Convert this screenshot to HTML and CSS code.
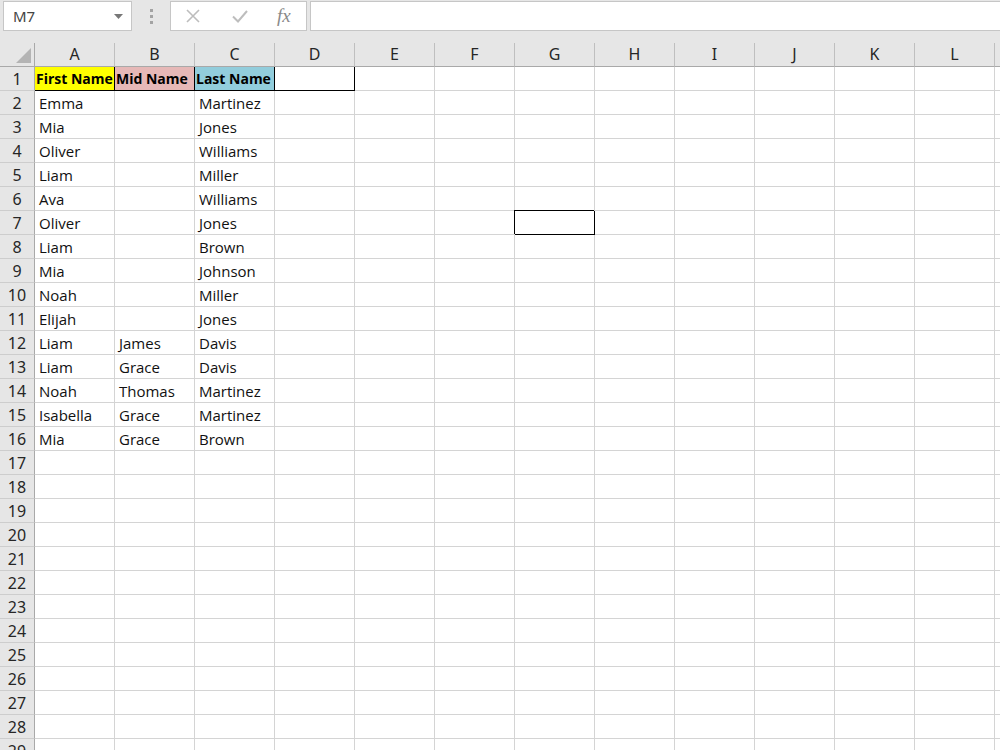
FILE: index.html
```html
<!DOCTYPE html>
<html lang="en">
<head>
  <meta charset="UTF-8" />
  <title>Names - Excel</title>
  <link rel="stylesheet" href="styles.css">
</head>
<body>
  <div class="toolbar">
    <div class="namebox">
      <span>M7</span>
      <svg class="caret" width="9" height="5" viewBox="0 0 9 5"><path d="M0 0h9L4.5 5z" fill="#777"/></svg>
    </div>
    <div class="grip"><i></i><i></i><i></i></div>
    <div class="fxbox">
      <svg width="16" height="16" viewBox="0 0 16 16"><path d="M2 2l12 12M14 2L2 14" stroke="#bdbdbd" stroke-width="1.6" fill="none"/></svg>
      <svg width="18" height="16" viewBox="0 0 18 16"><path d="M2 8.5l5 5L16 3" stroke="#bdbdbd" stroke-width="2" fill="none"/></svg>
      <span class="fx">fx</span>
    </div>
    <div class="formula"></div>
  </div>

  <div class="sheet" id="sheet"></div>

  <script>
    const cols = ["A", "B", "C", "D", "E", "F", "G", "H", "I", "J", "K", "L", "M"];
    const first = ["Emma", "Mia", "Oliver", "Liam", "Ava", "Oliver", "Liam", "Mia", "Noah", "Elijah", "Liam", "Liam", "Noah", "Isabella", "Mia"];
    const mid = ["", "", "", "", "", "", "", "", "", "", "James", "Grace", "Thomas", "Grace", "Grace"];
    const last = ["Martinez", "Jones", "Williams", "Miller", "Williams", "Jones", "Brown", "Johnson", "Miller", "Jones", "Davis", "Davis", "Martinez", "Martinez", "Brown"];
    const sheet = document.getElementById("sheet");

    function cell(cls, text) {
      const d = document.createElement("div");
      d.className = cls;
      d.textContent = text || "";
      sheet.appendChild(d);
      return d;
    }

    cell("corner");
    cols.forEach(c => cell("colhead", c));

    for (let r = 1; r <= 29; r++) {
      cell("rowhead", r);
      cols.forEach((c, i) => {
        let text = "";
        let cls = "cell";
        if (r === 1) {
          text = ["First Name", "Mid Name", "Last Name"][i] || "";
          if (i < 4) cls += " title";
          if (i === 0) cls += " yellow";
          if (i === 1) cls += " pink";
          if (i === 2) cls += " blue";
        } else if (r <= 16) {
          text = [first[r - 2], mid[r - 2], last[r - 2]][i] || "";
        }
        if (r === 7 && c === "G") cls += " selected";
        cell(cls, text);
      });
    }
  </script>
</body>
</html>
```

FILE: styles.css
```css
body {
  margin: 0;
  width: 1000px;
  height: 750px;
  overflow: hidden;
  background: #fff;
  font-family: "Open Sans", Arial, sans-serif;
}
.toolbar {
  height: 43px;
  background: #e6e6e6;
  display: flex;
  align-items: flex-start;
  padding-top: 1px;
  box-sizing: border-box;
}
.namebox {
  margin-left: 3px;
  width: 129px;
  height: 30px;
  background: #fff;
  border: 1px solid #c6c6c6;
  box-sizing: border-box;
  display: flex;
  align-items: center;
  justify-content: space-between;
  padding: 0 8px 0 9px;
  font-family: "Noto Sans", Arial, sans-serif;
  font-size: 15px;
  color: #444;
}
.grip {
  width: 38px;
  height: 30px;
  display: flex;
  flex-direction: column;
  align-items: center;
  justify-content: center;
  gap: 3px;
}
.grip i {
  width: 3px;
  height: 3px;
  background: #a3a3a3;
}
.fxbox {
  width: 137px;
  height: 30px;
  background: #fff;
  border: 1px solid #c6c6c6;
  box-sizing: border-box;
  display: flex;
  align-items: center;
  padding-left: 14px;
  gap: 30px;
}
.fx {
  font-family: "Liberation Serif", serif;
  font-style: italic;
  font-size: 19px;
  color: #8a8a8a;
  margin-left: -2px;
}
.formula {
  flex: 1;
  height: 30px;
  margin-left: 3px;
  background: #fff;
  border: 1px solid #c6c6c6;
  border-right: none;
  box-sizing: border-box;
}
.sheet {
  display: grid;
  grid-template-columns: 35px repeat(13, 80px);
  grid-auto-rows: 24px;
  width: 1000px;
  overflow: hidden;
}
.sheet > div {
  box-sizing: border-box;
  white-space: nowrap;
  overflow: hidden;
}
.corner {
  background: #e6e6e6;
  border-right: 1px solid #a9a9a9;
  border-bottom: 1px solid #a9a9a9;
  position: relative;
}
.corner::after {
  content: "";
  position: absolute;
  right: 3px;
  bottom: 3px;
  border-left: 15px solid transparent;
  border-bottom: 15px solid #b4b4b4;
}
.colhead {
  background: #e6e6e6;
  border-right: 1px solid #bfbfbf;
  border-bottom: 1px solid #a9a9a9;
  text-align: center;
  font-family: "Noto Sans", Arial, sans-serif;
  font-size: 16px;
  line-height: 23px;
  color: #262626;
}
.rowhead {
  background: #e6e6e6;
  border-right: 1px solid #a9a9a9;
  border-bottom: 1px solid #cdcdcd;
  text-align: center;
  font-family: "Noto Sans", Arial, sans-serif;
  font-size: 16px;
  line-height: 24px;
  color: #262626;
}
.cell {
  border-right: 1px solid #d4d4d4;
  border-bottom: 1px solid #d4d4d4;
  padding-left: 4px;
  font-size: 15px;
  line-height: 24px;
  color: #111;
}
.title {
  border-right-color: #000;
  border-bottom-color: #000;
  padding-left: 1px;
  font-size: 14px;
  font-weight: bold;
  color: #000;
}
.yellow {
  background: #ffff00;
}
.pink {
  background: #e6b8b7;
}
.blue {
  background: #92cddc;
}
.selected {
  border-right-color: #000;
  border-bottom-color: #000;
  box-shadow: -1px -1px 0 #000;
}
```
